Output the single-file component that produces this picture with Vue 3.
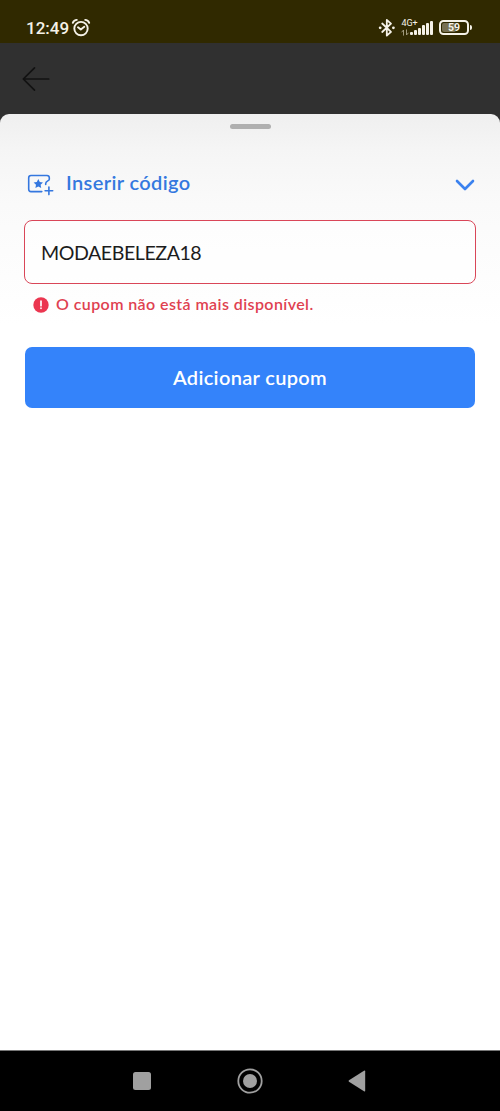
<script setup>
import { ref } from 'vue'

const code = ref('MODAEBELEZA18')
const bars = [3, 5, 7, 10, 12, 14]
</script>

<template>
  <div class="screen">
    <header class="status">
      <div class="status-left">
        <span class="clock">12:49</span>
        <svg class="alarm" width="20" height="20" viewBox="0 0 20 20">
          <circle cx="10" cy="10.6" r="6.7" />
          <path d="M1.8 4.8 C2.5 3 4 2 5.8 1.9 M18.2 4.8 C17.5 3 16 2 14.2 1.9 M7 9.3 L9.8 11.6 L13.3 8.8" />
        </svg>
      </div>
      <div class="status-right">
        <svg class="bluetooth" width="18" height="20" viewBox="0 0 18 20">
          <path d="M4.2 5.5 L13 13.8 L8.8 17.6 V2 L13 5.6 L4.2 14" />
          <circle class="dot" cx="2.2" cy="9.8" r="1.4" />
          <circle class="dot" cx="15.4" cy="9.8" r="1.4" />
        </svg>
        <div class="network">
          <span class="net-label">4G+</span>
          <svg width="9" height="7" viewBox="0 0 9 7">
            <path d="M2.5 6.2 V1 L.8 3 M5.5 .8 V6 L7.3 4" />
          </svg>
        </div>
        <div class="bars">
          <i v-for="h in bars" :key="h" :style="{ height: h + 'px' }"></i>
        </div>
        <div class="battery"><span class="level"></span><b>59</b></div>
        <span class="battery-tip"></span>
      </div>
    </header>

    <div class="appbar">
      <svg width="28" height="26" viewBox="0 0 28 26">
        <path d="M26.7 13 H1.5 M12.5 1.8 L1.3 13 L12.5 24.2" />
      </svg>
    </div>

    <main class="sheet">
      <div class="handle"></div>
      <div class="heading">
        <svg class="coupon" width="27" height="22" viewBox="0 0 27 22">
          <path d="M14.8 17.6 H4 Q1.7 17.6 1.7 15.3 V3.8 Q1.7 1.5 4 1.5 H20 Q22.3 1.5 22.3 3.8 V5.2 C22.3 7 18.7 6.8 18.7 9.5 V10.5 M21.9 13 V20.6 M18.1 16.8 H25.7" />
          <path class="star" d="M11.3 4.9 L12.8 7.9 L16 8.4 L13.6 10.7 L14.2 14 L11.3 12.4 L8.4 14 L9 10.7 L6.6 8.4 L9.8 7.9 Z" />
        </svg>
        <h1>Inserir código</h1>
        <svg class="chevron" width="20" height="12" viewBox="0 0 20 12">
          <path d="M2 2 L10 10 L18 2" />
        </svg>
      </div>
      <div class="field"><span>{{ code }}</span></div>
      <div class="error">
        <svg width="16" height="16" viewBox="0 0 16 16">
          <circle cx="8" cy="8" r="7.7" />
          <path d="M8 4 V8.7" />
          <path d="M8 11.2 V11.3" />
        </svg>
        <span>O cupom não está mais disponível.</span>
      </div>
      <button class="submit" type="button">Adicionar cupom</button>
    </main>

    <nav class="nav">
      <svg width="18" height="18" viewBox="0 0 18 18"><rect width="18" height="18" rx="2.5" /></svg>
      <svg width="26" height="26" viewBox="0 0 26 26">
        <circle class="ring" cx="13" cy="13" r="11.7" />
        <circle cx="13" cy="13" r="7" />
      </svg>
      <svg width="18" height="22" viewBox="0 0 18 22"><path d="M1 10.2 L16 .8 Q17.2 .2 17.2 1.5 V20.5 Q17.2 21.8 16 21.2 L1 11.8 Q0 11 1 10.2Z" /></svg>
    </nav>
  </div>
</template>

<style>
body { background: #000; }
</style>

<style scoped>
* { box-sizing: border-box; }
svg { display: block; flex: none; fill: none; stroke-linecap: round; stroke-linejoin: round; }
.screen {
  width: 500px;
  height: 1111px;
  display: flex;
  flex-direction: column;
  overflow: hidden;
  background: #303030;
  font-family: Lato, "Open Sans", sans-serif;
}
.status {
  height: 43px;
  padding: 13px 28px 0 26px;
  display: flex;
  justify-content: space-between;
  background: #302900;
  color: #f5f2e8;
  font-family: Roboto, sans-serif;
}
.status-left, .status-right { display: flex; }
.clock { font-size: 17px; line-height: 31px; font-weight: 500; width: 45px; }
.alarm { margin-top: 5px; stroke: #f5f2e8; stroke-width: 1.9; }
.bluetooth { margin-top: 5px; stroke: #f5f2e8; stroke-width: 1.8; }
.bluetooth .dot { fill: #f5f2e8; stroke: none; }
.network { width: 18px; margin: 5px 0 0 5px; display: flex; flex-direction: column; }
.net-label { font-size: 9px; line-height: 11px; }
.network svg { stroke: #aaa588; stroke-width: 0.9; }
.bars { display: flex; align-items: flex-end; gap: 1.3px; height: 22px; margin-left: -9px; }
.bars i { width: 2.7px; border-radius: 1px; background: #f5f2e8; }
.battery {
  position: relative;
  width: 30px;
  height: 15px;
  margin: 7px 0 0 6px;
  border: 2px solid #f5f2e8;
  border-radius: 4.5px;
  text-align: center;
  font-size: 10.5px;
  line-height: 12px;
}
.battery b { position: relative; font-weight: 700; }
.level { position: absolute; left: 1px; top: 1px; width: 14px; height: 9px; border-radius: 2px; background: #777052; }
.battery-tip { width: 2px; height: 5px; margin: 12px 0 0 1px; border-radius: 0 2px 2px 0; background: #f5f2e8; }
.appbar { height: 71px; padding: 23px 0 0 22px; }
.appbar svg { stroke: #121212; stroke-width: 1.7; }
.sheet {
  height: 936px;
  padding: 10px 24px 0;
  border-radius: 9px 9px 0 0;
  background: linear-gradient(#efefef 0, #f5f5f5 35px, #fafafa 90px, #fff 210px);
}
.handle { width: 41px; height: 5px; margin: 0 auto; border-radius: 3px; background: #b0b0b0; }
.heading { height: 91px; padding: 0 1px 0 3px; display: flex; align-items: flex-start; }
.coupon { margin-top: 45px; stroke: #3477df; stroke-width: 1.6; }
.coupon .star { fill: #3477df; stroke: none; }
h1 { margin: 41px 0 0 12px; font-size: 20px; line-height: 24px; font-weight: 600; letter-spacing: 0.37px; color: #3478df; white-space: nowrap; }
.chevron { margin: 50px 0 0 auto; stroke: #3b82ef; stroke-width: 2.6; }
.field {
  height: 64px;
  padding: 0 16px;
  border: 1.5px solid #d94658;
  border-radius: 8px;
  display: flex;
  align-items: center;
  background: #fff9;
  color: #1c1c1c;
  font-size: 19.6px;
  letter-spacing: -0.45px;
}
.error {
  height: 42px;
  padding-left: 9px;
  display: flex;
  align-items: center;
  gap: 7px;
  color: #df4150;
  font-size: 16px;
  font-weight: 600;
  letter-spacing: 0.41px;
  white-space: nowrap;
}
.error span { margin-top: -3px; }
.error circle { fill: #eb3650; }
.error path { stroke: #fff; stroke-width: 1.7; }
.submit {
  display: block;
  width: 450px;
  height: 61px;
  margin: 21px auto 0;
  padding: 0 0 2px;
  border: 0;
  border-radius: 7px;
  background: #3483fa;
  color: #fff;
  font: 600 20px Lato, "Open Sans", sans-serif;
  letter-spacing: 0.34px;
}
.nav {
  height: 61px;
  padding: 0 134px 0 133px;
  border-top: 1px solid #777;
  display: flex;
  align-items: center;
  justify-content: space-between;
  background: #000;
}
.nav svg { fill: #a0a0a0; }
.nav .ring { fill: none; stroke: #a0a0a0; stroke-width: 1.8; }
</style>
